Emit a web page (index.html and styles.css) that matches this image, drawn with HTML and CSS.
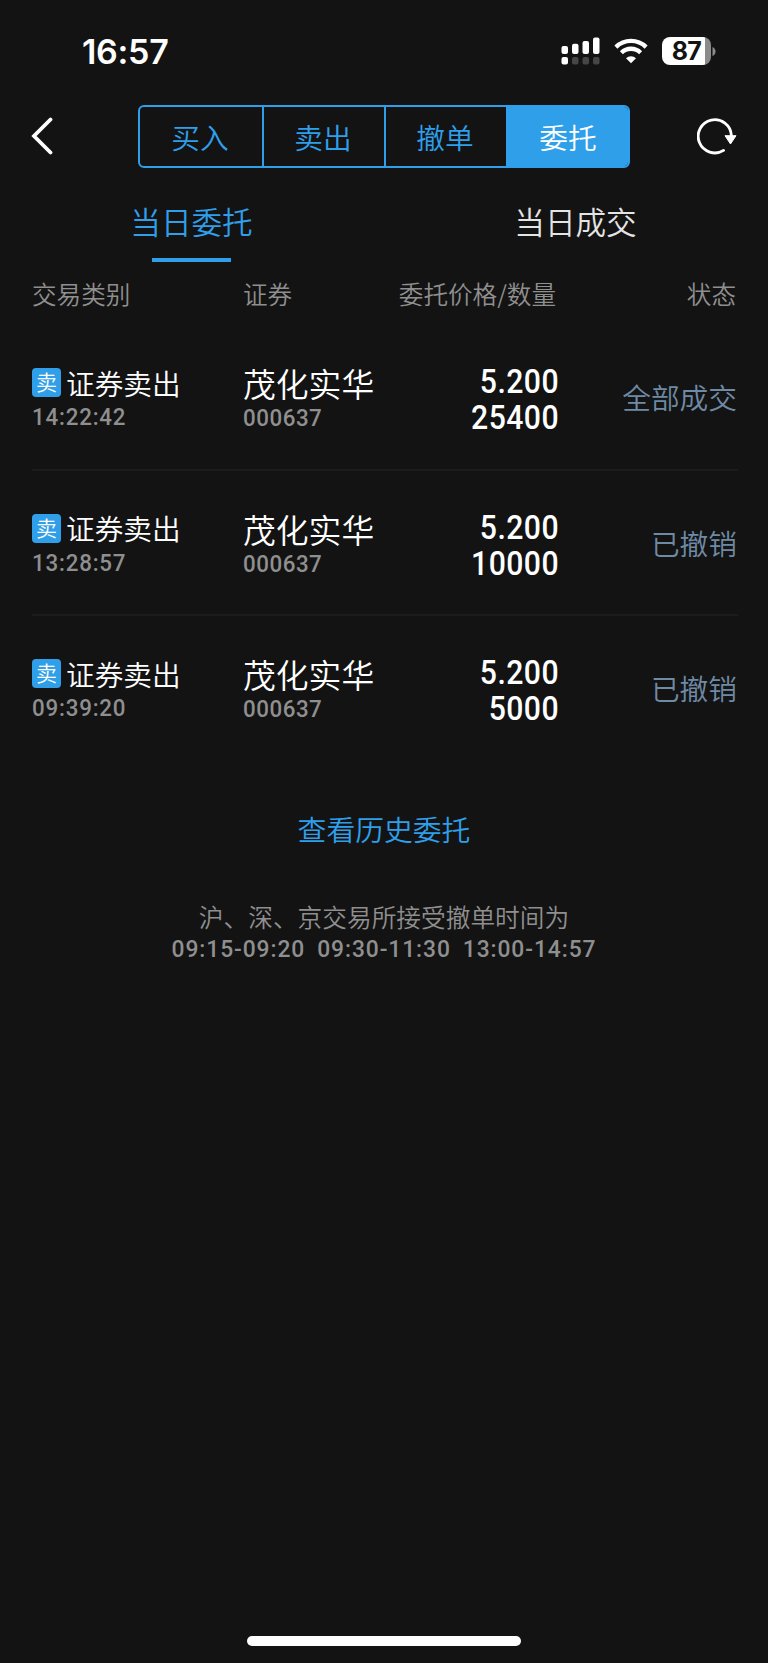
FILE: index.html
```
<!DOCTYPE html>
<html lang="zh-CN">
<head>
<meta charset="UTF-8">
<meta name="viewport" content="width=device-width, initial-scale=1.0">
<title>当日委托</title>
<link rel="stylesheet" href="styles.css">
</head>
<body>
<div class="status-bar">
    <span class="clock">16:57</span>
    <div class="indicators">
        <svg class="signal" width="40" height="28" viewBox="0 0 40 28">
            <g fill="#fff">
                <rect x="0.5" y="9" width="6.5" height="8" rx="2"/>
                <rect x="11" y="6.8" width="6.5" height="10.2" rx="2"/>
                <rect x="21.5" y="4" width="6.5" height="13" rx="2"/>
                <rect x="32" y="0.5" width="6.5" height="16.5" rx="2"/>
                <rect x="0.5" y="20" width="6.5" height="7.5" rx="2"/>
            </g>
            <g fill="#464646">
                <rect x="11" y="20" width="6.5" height="7.5" rx="2"/>
                <rect x="21.5" y="20" width="6.5" height="7.5" rx="2"/>
                <rect x="32" y="20" width="6.5" height="7.5" rx="2"/>
            </g>
        </svg>
        <svg class="wifi" width="34" height="26" viewBox="0 0 34 26">
            <g fill="none" stroke="#fff" stroke-width="4.3">
                <path d="M1.9 9.1 A21.6 21.6 0 0 1 32.1 9.1"/>
                <path d="M7.4 14.7 A13.7 13.7 0 0 1 26.6 14.7"/>
            </g>
            <path d="M17 25.3 L12 20.2 A7.2 7.2 0 0 1 22 20.2 Z" fill="#fff"/>
        </svg>
        <div class="battery"><span>87</span></div>
        <svg class="battery-cap" width="4" height="9" viewBox="0 0 4 9">
            <path d="M0.5 0 Q3.5 1.5 3.5 4.5 Q3.5 7.5 0.5 9 Z" fill="#8a8a8a"/>
        </svg>
    </div>
</div>
<div class="nav">
    <svg class="back" width="22" height="38" viewBox="0 0 22 38">
        <path d="M19.5 2.5 L3 19 L19.5 35.5" fill="none" stroke="#fff" stroke-width="3.8" stroke-linecap="round"/>
    </svg>
    <div class="segment">
        <div class="item">买入</div>
        <div class="item">卖出</div>
        <div class="item">撤单</div>
        <div class="item active">委托</div>
    </div>
    <svg class="refresh" width="40" height="38" viewBox="0 0 40 38">
        <path d="M26.6 33.4 A16.6 16.6 0 1 1 34.4 18.5" fill="none" stroke="#fff" stroke-width="2.8" stroke-linecap="round"/>
        <path d="M28 18.7 L39 18.7 L33.5 27 Z" fill="#fff" stroke="#fff" stroke-width="1" stroke-linejoin="round"/>
    </svg>
</div>
<div class="tabs">
    <div class="tab active">当日委托</div>
    <div class="tab">当日成交</div>
</div>
<div class="columns head">
    <div>交易类别</div>
    <div>证券</div>
    <div class="right">委托价格/数量</div>
    <div class="right">状态</div>
</div>
<div class="orders">
    <div class="columns row">
        <div>
            <div class="kind"><span class="badge">卖</span>证券卖出</div>
            <div class="sub time">14:22:42</div>
        </div>
        <div>
            <div class="stock">茂化实华</div>
            <div class="sub">000637</div>
        </div>
        <div class="amount">5.200<br>25400</div>
        <div class="state">全部成交</div>
    </div>
    <div class="columns row">
        <div>
            <div class="kind"><span class="badge">卖</span>证券卖出</div>
            <div class="sub time">13:28:57</div>
        </div>
        <div>
            <div class="stock">茂化实华</div>
            <div class="sub">000637</div>
        </div>
        <div class="amount">5.200<br>10000</div>
        <div class="state">已撤销</div>
    </div>
    <div class="columns row">
        <div>
            <div class="kind"><span class="badge">卖</span>证券卖出</div>
            <div class="sub time">09:39:20</div>
        </div>
        <div>
            <div class="stock">茂化实华</div>
            <div class="sub">000637</div>
        </div>
        <div class="amount">5.200<br>5000</div>
        <div class="state">已撤销</div>
    </div>
</div>
<div class="history">查看历史委托</div>
<div class="note">
    <div>沪、深、京交易所接受撤单时间为</div>
    <div class="hours"><span>09:15-09:20</span><span>09:30-11:30</span><span>13:00-14:57</span></div>
</div>
<div class="home-bar"></div>
</body>
</html>
```
FILE: styles.css
```
* {
    box-sizing: border-box;
}
body {
    margin: 0;
    height: 1663px;
    background: #131313;
    color: #fff;
    font-family: "Noto Sans CJK SC", sans-serif;
    font-weight: 350;
    display: flex;
    flex-direction: column;
    overflow: hidden;
}
.status-bar {
    height: 104px;
    padding: 31px 52px 0 82px;
    display: flex;
    justify-content: space-between;
    align-items: flex-start;
}
.clock {
    font: 600 34px/41px Inter, sans-serif;
    letter-spacing: -0.3px;
}
.indicators {
    display: flex;
    align-items: center;
    padding-top: 6px;
}
.wifi {
    margin: 0 14px 0 13px;
}
.battery {
    width: 49px;
    height: 28px;
    border-radius: 8px;
    background: linear-gradient(to right, #fff 43px, #8a8a8a 43px);
    color: #131313;
    font: 700 25px/29px Inter, sans-serif;
    letter-spacing: -0.7px;
    text-align: center;
}
.battery-cap {
    margin-left: 1px;
}
.nav {
    height: 64px;
    padding: 0 31px;
    display: flex;
    justify-content: space-between;
    align-items: center;
}
.segment {
    width: 492px;
    height: 63px;
    margin-left: 18px;
    border: 2px solid #2f9fea;
    border-radius: 6px;
    display: grid;
    grid-template-columns: 124px 122px 122px 1fr;
    overflow: hidden;
}
.item {
    padding-right: 2px;
    border-right: 2px solid #2f9fea;
    color: #2f9fea;
    font-size: 28.7px;
    line-height: 60px;
    text-align: center;
}
.item.active {
    padding: 0;
    background: #2f9fea;
    border: none;
    color: #fff;
}
.tabs {
    height: 94px;
    display: flex;
}
.tab {
    flex: 1;
    display: flex;
    flex-direction: column;
    align-items: center;
    font-size: 30.6px;
    line-height: 44px;
    padding: 31px 1px 0 0;
    color: #e4e4e4;
}
.tab.active {
    color: #2f9fea;
}
.tab.active::after {
    content: "";
    width: 79px;
    height: 4px;
    margin-top: 15px;
    background: #2f9fea;
}
.columns {
    margin: 0 30px 0 32px;
    display: grid;
    grid-template-columns: 211px 140px 175px 1fr;
}
.head {
    height: 63px;
    font-size: 24.6px;
    line-height: 63px;
    color: #8f8f8f;
}
.right {
    text-align: right;
}
.head .right {
    padding-right: 2px;
}
.row {
    height: 145.7px;
    padding-top: 37px;
    border-bottom: 2px solid #1e1c19;
}
.row:last-child {
    border-bottom: none;
}
.kind {
    display: flex;
    align-items: center;
    gap: 5px;
    height: 41px;
    font-size: 28.7px;
    line-height: 38px;
}
.badge {
    width: 29px;
    height: 29px;
    border-radius: 4px;
    background: #2f9fea;
    font-size: 21px;
    line-height: 27px;
    text-align: center;
}
.stock {
    height: 42px;
    font-size: 32.8px;
    line-height: 42px;
}
/* tall narrow figures */
.sub {
    font: 500 24.8px/28px Roboto, sans-serif;
    letter-spacing: 0.6px;
    color: #8f8f8f;
    transform: scaleX(0.9);
    transform-origin: left;
}
.time {
    letter-spacing: 0.9px;
}
.amount {
    padding-top: 2px;
    margin-right: -1px;
    font: 500 33.5px/36px Roboto, sans-serif;
    letter-spacing: 0.5px;
    text-align: right;
    transform: scaleX(0.9);
    transform-origin: right;
}
.state {
    font-size: 28.7px;
    line-height: 70px;
    text-align: right;
    padding-right: 1px;
    color: #6f8aa5;
}
.history {
    margin-top: 45px;
    font-size: 28.8px;
    line-height: 44px;
    text-align: center;
    color: #2f9fea;
}
.note {
    margin-top: 49px;
    font-size: 24.7px;
    line-height: 32px;
    text-align: center;
    color: #8f8f8f;
}
.hours {
    display: flex;
    justify-content: center;
    gap: 13px;
    font: 500 24.8px/34px Roboto, sans-serif;
    letter-spacing: 1px;
    transform: scaleX(0.92);
}
.home-bar {
    width: 274px;
    height: 10px;
    margin: auto auto 17px;
    border-radius: 5px;
    background: #fff;
}
```
